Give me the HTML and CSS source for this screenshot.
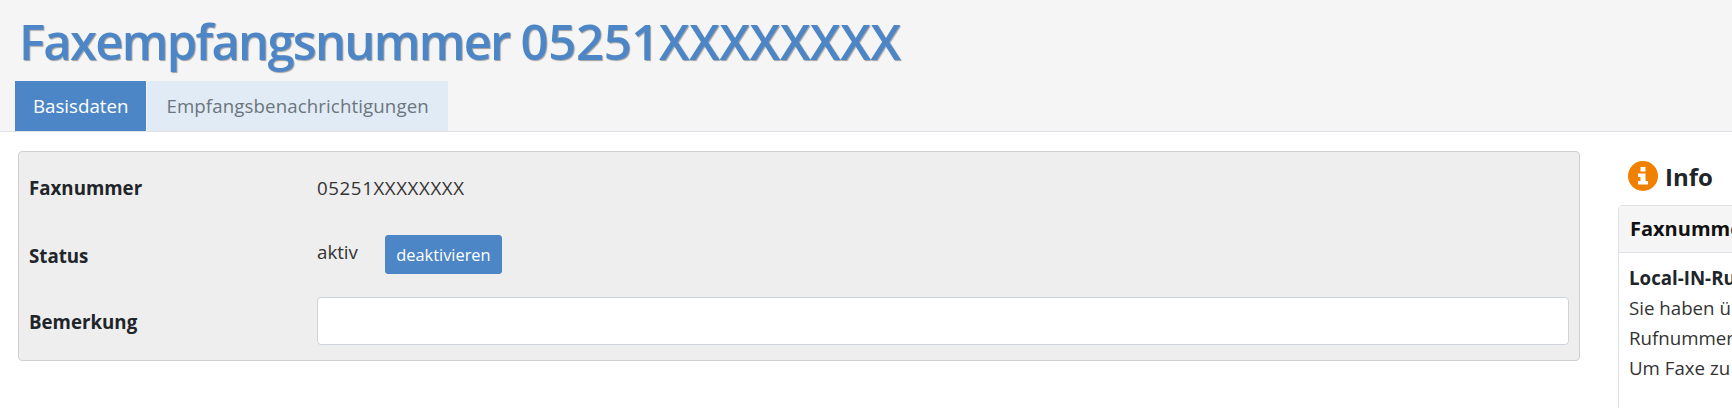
FILE: index.html
```html
<!DOCTYPE html>
<html>
<head>
  <title>Faxempfangsnummer</title>
  <link rel="stylesheet" href="styles.css">
</head>
<body>
  <header class="page-head">
    <h1>Faxempfangsnummer <span class="fax-no">05251XXXXXXXX</span></h1>
    <nav class="tabs">
      <a href="#" class="tab active">Basisdaten</a>
      <a href="#" class="tab">Empfangsbenachrichtigungen</a>
    </nav>
  </header>

  <div class="content">
    <div class="panel">
      <div class="row row-fax">
        <label>Faxnummer</label>
        <div class="value fax-value">05251XXXXXXXX</div>
      </div>
      <div class="row row-status">
        <label>Status</label>
        <div class="value status-value">
          <span class="status-text">aktiv</span>
          <button class="btn">deaktivieren</button>
        </div>
      </div>
      <div class="row row-note">
        <label>Bemerkung</label>
        <input type="text" class="field">
      </div>
    </div>

    <aside class="info">
      <h2>
        <svg class="info-icon" viewBox="0 0 30 30">
          <circle cx="15" cy="15" r="15" fill="#f08000"/>
          <rect x="12.5" y="6" width="5" height="4.5" fill="#fff"/>
          <path d="M10 12.5h7.500v7.500h2.500v3.500h-10v-3.500h2.500v-4h-2.500z" fill="#fff"/>
        </svg>
        Info
      </h2>
      <div class="card">
        <div class="card-head">Faxnummer</div>
        <div class="card-body">
          <strong>Local-IN-Rufnummer</strong>
          <p>Sie haben über diese Nummer</p>
          <p>Rufnummern zur Verfügung</p>
          <p>Um Faxe zu empfangen</p>
        </div>
      </div>
    </aside>
  </div>
</body>
</html>
```

FILE: styles.css
```css
html, body {
  height: 100%;
}

body {
  margin: 0;
  font-family: "Open Sans", sans-serif;
  font-size: 18.7px;
  color: #212529;
  background-color: #fff;
  overflow: hidden;
}

.page-head {
  height: 132px;
  box-sizing: border-box;
  padding: 9px 0 0 15px;
  background-color: #f5f5f5;
  border-bottom: 1px solid #dee2e6;
  display: flex;
  flex-direction: column;
}

.page-head h1 {
  margin: 0 0 0 4px;
  font-size: 49px;
  line-height: 64px;
  height: 72px;
  font-weight: 600;
  letter-spacing: -1.76px;
  color: #4c86c6;
  text-shadow: 1px 1px 1px rgba(0, 0, 0, 0.35);
  white-space: nowrap;
}

.fax-no {
  letter-spacing: -0.3px;
}

.tabs {
  display: flex;
  gap: 1px;
}

.tab {
  height: 50px;
  line-height: 50px;
  padding: 0 19px;
  letter-spacing: 0.1px;
  text-decoration: none;
  color: #6c757d;
  background-color: #e1ebf6;
}

.tab.active {
  padding: 0 18px;
  letter-spacing: 0;
  color: #fff;
  background-color: #4c86c6;
}

.content {
  display: flex;
  align-items: flex-start;
  gap: 38px;
  padding: 19px 0 0 18px;
}

.panel {
  flex: none;
  width: 1562px;
  height: 210px;
  box-sizing: border-box;
  padding: 0 10px;
  background-color: #eee;
  border: 1px solid #d0d0d0;
  border-radius: 4px;
}

.row {
  display: flex;
  align-items: center;
}

.row label {
  flex: none;
  width: 288px;
  font-weight: 700;
}

.row-fax {
  height: 70px;
}

.row-status {
  height: 64px;
}

.row-note {
  height: 69px;
}

.row-status label {
  margin-top: 3px;
}

.row-note label {
  margin-top: 2px;
}

.fax-value {
  letter-spacing: 0.6px;
  color: #333;
}

.status-value {
  display: flex;
  align-items: center;
  gap: 27px;
}

.status-text {
  margin-top: -6px;
  color: #333;
}

.btn {
  width: 117px;
  height: 39px;
  padding: 0;
  font-family: inherit;
  font-size: 16.4px;
  color: #fff;
  background-color: #4c86c6;
  border: 1px solid #4c86c6;
  border-radius: 3px;
}

.field {
  flex: 1;
  height: 48px;
  box-sizing: border-box;
  background-color: #fff;
  border: 1px solid #ced4da;
  border-radius: 4px;
}

.info {
  flex: none;
  width: 420px;
  padding-top: 11px;
}

.info h2 {
  margin: -1px 0 14px 10px;
  height: 30px;
  display: flex;
  align-items: center;
  gap: 7px;
  font-size: 24px;
  font-weight: 700;
}

.info-icon {
  width: 30px;
  height: 30px;
}

.card {
  height: 220px;
  border: 1px solid #dee2e6;
  border-radius: 4px;
}

.card-head {
  height: 46px;
  line-height: 46px;
  padding-left: 11px;
  font-size: 20px;
  font-weight: 700;
  color: #111;
  background-color: #f5f5f5;
  border-bottom: 1px solid #dee2e6;
}

.card-body {
  padding: 10px;
  line-height: 30px;
}

.card-body p {
  margin: 0;
  color: #333;
}
```
